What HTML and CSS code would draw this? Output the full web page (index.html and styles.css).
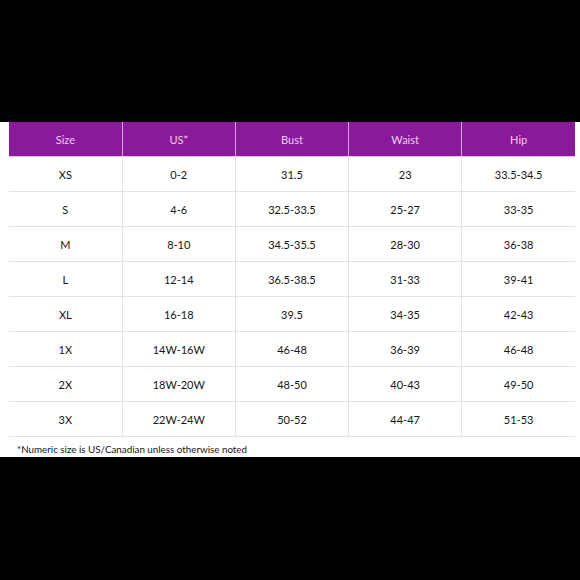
FILE: index.html
```html
<!DOCTYPE html>
<html>
<head>
<meta charset="utf-8">
<link rel="stylesheet" href="styles.css">
</head>
<body>
<div class="top"></div>
<div class="sheet">
  <table class="chart">
    <thead>
      <tr><th>Size</th><th>US*</th><th>Bust</th><th>Waist</th><th>Hip</th></tr>
    </thead>
    <tbody>
      <tr><td>XS</td><td>0-2</td><td>31.5</td><td>23</td><td>33.5-34.5</td></tr>
      <tr><td>S</td><td>4-6</td><td>32.5-33.5</td><td>25-27</td><td>33-35</td></tr>
      <tr><td>M</td><td>8-10</td><td>34.5-35.5</td><td>28-30</td><td>36-38</td></tr>
      <tr><td>L</td><td>12-14</td><td>36.5-38.5</td><td>31-33</td><td>39-41</td></tr>
      <tr><td>XL</td><td>16-18</td><td>39.5</td><td>34-35</td><td>42-43</td></tr>
      <tr><td>1X</td><td>14W-16W</td><td>46-48</td><td>36-39</td><td>46-48</td></tr>
      <tr><td>2X</td><td>18W-20W</td><td>48-50</td><td>40-43</td><td>49-50</td></tr>
      <tr><td>3X</td><td>22W-24W</td><td>50-52</td><td>44-47</td><td>51-53</td></tr>
    </tbody>
  </table>
  <p class="note">*Numeric size is US/Canadian unless otherwise noted</p>
</div>
</body>
</html>
```
FILE: styles.css
```css
html, body {
  margin: 0;
  padding: 0;
  background: #000;
  width: 580px;
  height: 580px;
  overflow: hidden;
  font-family: Lato, "Open Sans", sans-serif;
}
.top {
  height: 122px;
}
.sheet {
  background: #fff;
  padding: 0 5px 0 9px;
  height: 335px;
  box-sizing: border-box;
}
.chart {
  width: 566px;
  border-collapse: collapse;
  table-layout: fixed;
}
.chart th {
  background: #8a1a9b;
  color: #f2cdf2;
  font-weight: 400;
  font-size: 11px;
  height: 34px;
  padding: 0;
  border-left: 1px solid #d9a3e0;
  border-bottom: 1px solid #e8bdee;
}
.chart td {
  color: #151515;
  font-size: 11px;
  text-align: center;
  height: 34px;
  padding: 0;
  border-left: 1px solid #e2e2e2;
  border-bottom: 1px solid #e2e2e2;
}
.chart th:first-child,
.chart td:first-child {
  border-left: none;
}
.note {
  margin: 0;
  padding: 4px 0 0 8px;
  line-height: 17px;
  font-size: 9.8px;
  color: #151515;
}
```
